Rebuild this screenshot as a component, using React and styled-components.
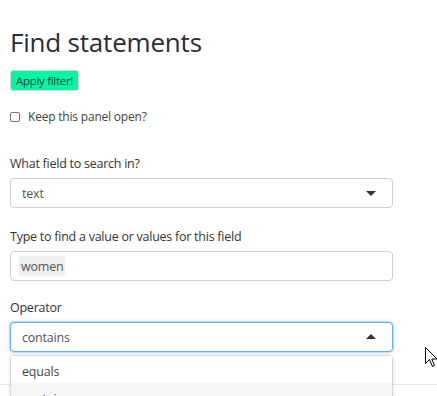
import React from "react";
import styled, { createGlobalStyle } from "styled-components";

const Global = createGlobalStyle`
  html, body { margin: 0; padding: 0; background: #fff; }
  body { font-family: "Open Sans", "Noto Sans", sans-serif; color: #333; overflow: hidden; }
  * { box-sizing: border-box; }
`;

const Page = styled.div`
  position: relative;
  width: 437px;
  height: 396px;
  overflow: hidden;
`;

const Panel = styled.div`
  padding: 26px 0 0 10px;
  width: 393px;
`;

const Title = styled.h3`
  margin: 0 0 12px;
  font-size: 26px;
  font-weight: 400;
  line-height: 32px;
  color: #2d2b3f;
  letter-spacing: -0.2px;
`;

const ApplyButton = styled.button`
  display: block;
  height: 21px;
  width: 69px;
  padding: 0;
  border: 1px solid #d8d8d8;
  border-radius: 3px;
  background: #00f7a4;
  color: #27352f;
  font-family: inherit;
  font-size: 11.5px;
  letter-spacing: -0.3px;
`;

const CheckRow = styled.label`
  display: flex;
  align-items: center;
  gap: 8px;
  margin-top: 17px;
  font-size: 12px;
  color: #444;
  letter-spacing: -0.2px;
`;

const Box = styled.span`
  width: 10px;
  height: 10px;
  border: 1px solid #767676;
  border-radius: 2px;
  background: #fff;
`;

const Field = styled.div`
  margin-top: ${(p) => p.$top}px;
`;

const Label = styled.div`
  font-size: 12.5px;
  color: #333;
  line-height: 18px;
  margin-bottom: 5px;
  letter-spacing: -0.25px;
`;

const Control = styled.div`
  position: relative;
  display: flex;
  align-items: center;
  height: 30px;
  width: 383px;
  padding: 0 ${(p) => (p.$tag ? 8 : 11)}px;
  border: 1px solid ${(p) => (p.$focus ? "#66afe9" : "#cfcfcf")};
  border-radius: 4px;
  background: #fff;
  box-shadow: ${(p) =>
    p.$focus ? "0 0 0 1px rgba(102,175,233,0.25), 0 0 4px rgba(102,175,233,0.5)" : "none"};
  font-size: 12.5px;
  color: #555;
  letter-spacing: -0.2px;
`;

const Caret = styled.span`
  position: absolute;
  right: 16px;
  top: 50%;
  margin-top: ${(p) => (p.$up ? -3 : -2)}px;
  width: 0;
  height: 0;
  border-left: 5px solid transparent;
  border-right: 5px solid transparent;
  ${(p) => (p.$up ? "border-bottom: 5px solid #333;" : "border-top: 5px solid #333;")}
`;

const Tag = styled.span`
  display: inline-flex;
  align-items: center;
  height: 20px;
  padding: 0 2px;
  background: #efefef;
  border-radius: 3px;
  color: #555;
`;

const Divider = styled.div`
  position: absolute;
  left: 0;
  right: 0;
  top: 384px;
  border-top: 1px solid #e4e4e4;
`;

const Menu = styled.div`
  position: absolute;
  left: 10px;
  top: 355px;
  width: 383px;
  background: #fff;
  border: 1px solid #d8d8d8;
  border-radius: 4px;
  box-shadow: 0 1px 4px rgba(0, 0, 0, 0.12);
`;

const Option = styled.div`
  height: 27px;
  display: flex;
  align-items: center;
  padding: 3px 11px 0;
  font-size: 12.5px;
  color: #444;
  letter-spacing: -0.2px;
  background: ${(p) => (p.$active ? "#f5f5f5" : "#fff")};
`;

const Cursor = styled.svg`
  position: absolute;
  left: 425px;
  top: 347px;
`;

export default function App() {
  return (
    <Page>
      <Global />
      <Divider />
      <Panel>
        <Title>Find statements</Title>
        <ApplyButton>Apply filter!</ApplyButton>
        <CheckRow>
          <Box />
          Keep this panel open?
        </CheckRow>
        <Field $top={30}>
          <Label>What field to search in?</Label>
          <Control>
            text
            <Caret />
          </Control>
        </Field>
        <Field $top={20}>
          <Label>Type to find a value or values for this field</Label>
          <Control $tag>
            <Tag>women</Tag>
          </Control>
        </Field>
        <Field $top={18}>
          <Label>Operator</Label>
          <Control $focus>
            contains
            <Caret $up />
          </Control>
        </Field>
      </Panel>
      <Menu>
        <Option>equals</Option>
        <Option $active>contains</Option>
      </Menu>
      <Cursor width="13" height="21" viewBox="0 0 13 21">
        <path d="M0.5 0.5 L0.5 16.5 L4.5 12.5 L7.5 19.5 L9.5 18.5 L6.8 12 L12 12 Z" fill="#fff" stroke="#000" strokeWidth="1" />
      </Cursor>
    </Page>
  );
}
